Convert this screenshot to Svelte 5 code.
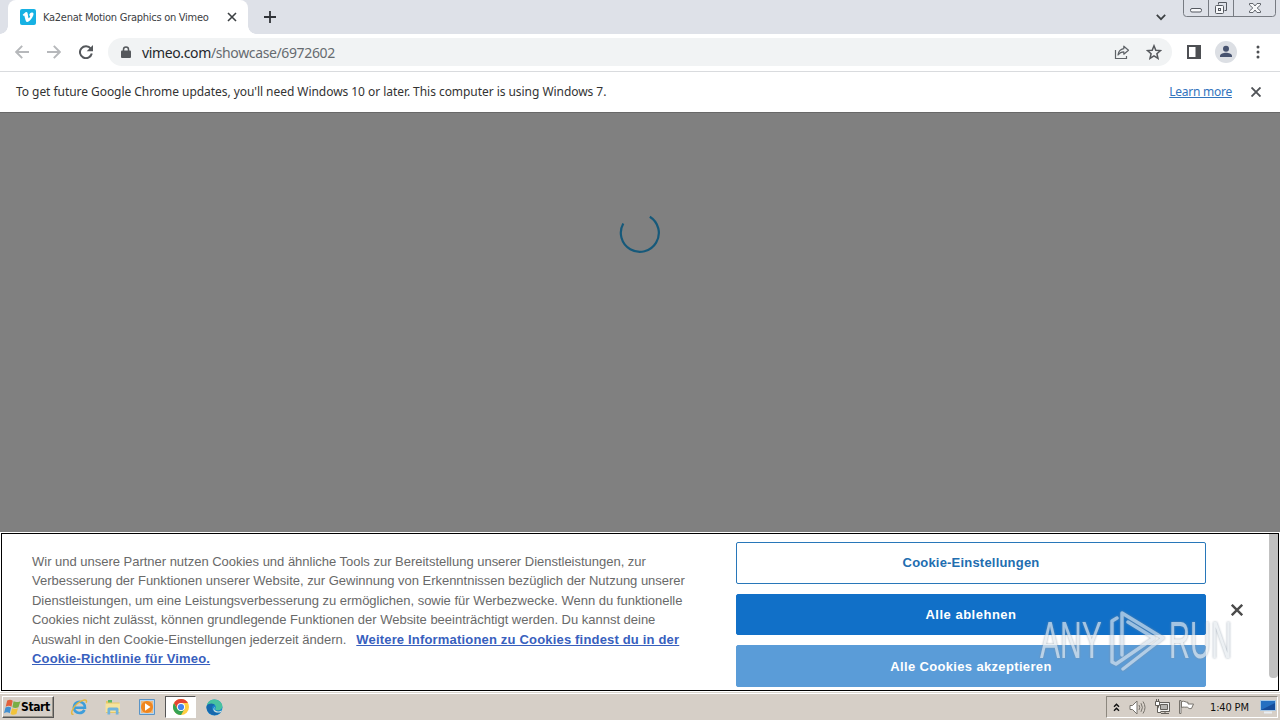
<script lang="ts">
	type Line = { text: string; link?: string };

	const pageTitle = 'Ka2enat Motion Graphics on Vimeo';
	const time = '1:40 PM';

	const lines: Line[] = [
		{ text: 'Wir und unsere Partner nutzen Cookies und ähnliche Tools zur Bereitstellung unserer Dienstleistungen, zur' },
		{ text: 'Verbesserung der Funktionen unserer Website, zur Gewinnung von Erkenntnissen bezüglich der Nutzung unserer' },
		{ text: 'Dienstleistungen, um eine Leistungsverbesserung zu ermöglichen, sowie für Werbezwecke. Wenn du funktionelle' },
		{ text: 'Cookies nicht zulässt, können grundlegende Funktionen der Website beeinträchtigt werden. Du kannst deine' },
		{ text: 'Auswahl in den Cookie-Einstellungen jederzeit ändern.', link: 'Weitere Informationen zu Cookies findest du in der' },
		{ text: '', link: 'Cookie-Richtlinie für Vimeo.' }
	];
</script>

<div class="screen">
	<header class="tabstrip">
		<div class="tab">
			<svg class="favicon" width="16" height="16" viewBox="0 0 16 16">
				<rect width="16" height="16" rx="2" fill="#17b1e3" />
				<path d="M2.7 5.7 5.5 3.3c1.5-.8 2 .2 2.3 2l.5 3.3c.3 1 .7.9 1.3-.1.8-1.3 1-2.3-.5-1.9.5-2.4 1.8-3.5 3.4-3.1 1.3.4 1.2 1.8.7 3.1-.8 2.2-3 4.9-4.6 6-1.7 1-2.6-.1-3.1-1.7L4.4 7.1c-.2-.8-.5-.6-1.1-.2z" fill="#fff" />
			</svg>
			<span class="tab-title">{pageTitle}</span>
			<svg width="10" height="10" viewBox="0 0 10 10" stroke="#3c4043" stroke-width="1.6"><path d="m1 1 8 8M9 1 1 9" /></svg>
		</div>
		<svg class="new-tab" width="12" height="12" viewBox="0 0 12 12" stroke="#303338" stroke-width="1.8"><path d="M6 0v12M0 6h12" /></svg>
		<svg class="tab-search" width="10" height="7" viewBox="0 0 10 7" fill="none" stroke="#3c4043" stroke-width="1.7"><path d="m.8.8 4.2 4.4L9.2.8" /></svg>
		<svg class="window-buttons" width="94" height="18" viewBox="0 0 94 18" fill="none" stroke="#777b82">
			<path d="M.5 0v13.5q0 3 3 3h86q3 0 3-3V0M25.5 0v16M50.5 0v16" />
			<rect x="7.5" y="8.500" width="11" height="3.5" rx="1.5" fill="#f7f8fa" stroke="#555960" />
			<path d="M35.5 4.5v-2h8v8h-2" stroke="#555960" />
			<rect x="32.5" y="5.5" width="8" height="8" rx="1" fill="#f7f8fa" stroke="#555960" />
			<rect x="35.5" y="8.5" width="2" height="2" stroke="#555960" />
			<path d="M66.500 3.500h3.500l2 2.500 2-2.500h3.500v1.500L74.200 8l3.300 3v1.500H74l-2-2.500-2 2.500h-3.500V11l3.300-3-3.300-3z" fill="#f7f8fa" stroke="#555960" stroke-width=".9" />
		</svg>
	</header>

	<nav class="toolbar">
		<svg class="back" width="14" height="14" viewBox="0 0 14 14" fill="none" stroke="#b6b8bb" stroke-width="1.9"><path d="M7.200.8 1.200 7l6 6.200M1.400 7H14" /></svg>
		<svg class="forward" width="14" height="14" viewBox="0 0 14 14" fill="none" stroke="#b6b8bb" stroke-width="1.9"><path d="M6.800.8 12.800 7l-6 6.200M12.600 7H0" /></svg>
		<svg class="reload" width="14" height="14" viewBox="0 0 14 14" fill="none" stroke="#55585c" stroke-width="2"><path d="M11.800 3.600A6 6 0 1 0 12.800 8.600" /><path d="M14 0v6.300H7.700z" fill="#55585c" stroke="none" /></svg>
		<div class="omnibox">
			<svg width="10" height="13" viewBox="0 0 10 13"><path d="M2.500 5V3.400a2.500 2.500 0 0 1 5 0V5" fill="none" stroke="#55585c" stroke-width="1.5" /><rect y="4.500" width="10" height="7.500" rx="1" fill="#55585c" /></svg>
			<span class="url">vimeo.com<span class="path">/showcase/6972602</span></span>
			<svg class="share" width="16" height="15" viewBox="0 0 16 15" fill="none" stroke="#5f6368" stroke-width="1.2"><path d="M1.500 5v8.500h11V11" /><path d="M9.800 1.200 14.500 5.200l-4.700 4V6.800C7.500 6.800 5.700 7.600 4 10c.4-3.500 2.500-5.800 5.800-6.300z" stroke-linejoin="round" /></svg>
			<svg width="16" height="16" viewBox="0 0 16 16" fill="none" stroke="#55585c" stroke-width="1.5"><path d="m8 1.800 1.800 4.400 4.700.4-3.600 3.100 1.100 4.600-4-2.500-4 2.500 1.100-4.600-3.600-3.100 4.700-.4z" /></svg>
		</div>
		<svg class="panel" width="14" height="14" viewBox="0 0 14 14"><path d="M0 0h14v14H0zM2 2v10h6.500V2z" fill="#4d4f53" fill-rule="evenodd" /></svg>
		<svg class="profile" width="22" height="22" viewBox="0 0 22 22"><circle cx="11" cy="11" r="11" fill="#dcdfe4" /><circle cx="11" cy="7.700" r="3" fill="#47536f" /><path d="M5 16v-1c0-2.200 3.500-3.300 6-3.300s6 1.100 6 3.300v1z" fill="#47536f" /></svg>
		<svg class="menu" width="4" height="14" viewBox="0 0 4 14" fill="#4d4f53"><circle cx="2" cy="2" r="1.500" /><circle cx="2" cy="7" r="1.500" /><circle cx="2" cy="12" r="1.500" /></svg>
	</nav>

	<div class="infobar">
		<span class="notice">To get future Google Chrome updates, you'll need Windows 10 or later. This computer is using Windows 7.</span>
		<span class="learn">Learn more</span>
		<svg width="10" height="10" viewBox="0 0 10 10" stroke="#505357" stroke-width="1.9"><path d="m.5.500 9 9M9.500.500l-9 9" /></svg>
	</div>

	<main class="page">
		<svg width="42" height="42" viewBox="0 0 42 42" fill="none" stroke="#16597a" stroke-width="2.2"><path d="M4.300 11.500A19 19 0 1 0 30.800 4.700" /></svg>
	</main>

	<section class="banner">
		<div class="consent">
			<p>
				{#each lines as line}
					<span class="line">{#if line.text}<span class="text">{line.text}</span>{/if}{#if line.link}<b>{line.link}</b>{/if}</span>
				{/each}
			</p>
			<div class="actions">
				<button class="settings">Cookie-Einstellungen</button>
				<button class="reject">Alle ablehnen</button>
				<button class="accept">Alle Cookies akzeptieren</button>
			</div>
			<svg class="close" width="12" height="12" viewBox="0 0 12 12" stroke="#4b4b4b" stroke-width="2.4"><path d="m.8.800 10.400 10.400M11.200.800.800 11.200" /></svg>
			<div class="scrollbar"></div>
		</div>
	</section>

	<footer class="taskbar">
		<div class="start">
			<svg width="17" height="17" viewBox="0 0 16 16">
				<path d="M3 1.500c2-1 3.600-.9 5.200.1L7 7.200C5.400 6.200 3.600 6.200 1.600 7.200z" fill="#e2603b" />
				<path d="M9 2.200c2 1 3.700 1 6.500-.1L13.600 7.800c-2 1-3.900 1-5.700 0z" fill="#79ae45" />
				<path d="M1.400 8c2-1 3.600-.9 5.300.1l-1.300 5.200c-1.800-1-3.400-1-5.400 0z" fill="#428fd0" />
				<path d="M7.600 8.600c1.900 1 3.500 1 5.500 0l-1.400 5.500c-2 1-3.700 1-5.500-.1z" fill="#f2c33a" />
			</svg>
			<span>Start</span>
		</div>
		<div class="apps">
			<svg width="18" height="18" viewBox="0 0 18 18" fill="none">
				<path d="M14.500 11.800C13.300 14.200 11.500 15 9.300 15a5.600 5.600 0 1 1 5.700-5.200H5" stroke="#3e9edb" stroke-width="2.600" />
				<path d="M3.500 16.200C-.5 17.500 2.500 9 8 5c4.500-3.300 10-4.700 8.200-.2" stroke="#e5b842" stroke-width="1.500" />
			</svg>
			<svg width="18" height="18" viewBox="0 0 18 18">
				<path d="M2 3h5l1 1.500h7.500V15H2z" fill="#e7c766" /><path d="M4 2h4v2.500H4z" fill="#5db868" /><path d="M1.500 5.500h14.500v8.500H1.500z" fill="#f6e39d" /><path d="M3.500 16.500V11q0-1.500 1.500-1.500h8q1.500 0 1.500 1.500v5.500h-2.700v-4h-5.600v4z" fill="#71b4dc" />
			</svg>
			<svg width="18" height="18" viewBox="0 0 18 18">
				<path d="M1.500 1.500h15v15h-15z" fill="#b6d5ee" stroke="#5a94c6" /><path d="M3 3h12v12H3z" fill="#efb87c" /><circle cx="9" cy="9" r="6" fill="#ef861f" /><path d="m7 5.200 5.500 3.800L7 12.800z" fill="#fff" />
			</svg>
			<div class="active">
				<svg width="16" height="16" viewBox="0 0 16 16">
					<circle cx="8" cy="8" r="8" fill="#ffce42" /><path d="M8 8 4.500 10 1.070 4A8 8 0 0 0 8 16l3.500-6z" fill="#36a354" /><path d="M1.070 4A8 8 0 0 1 14.930 4H8L4.500 9.500z" fill="#e44434" /><circle cx="8" cy="8" r="4" fill="#fff" /><circle cx="8" cy="8" r="3.100" fill="#4384ef" />
				</svg>
			</div>
			<svg width="17" height="17" viewBox="0 0 17 17">
				<circle cx="8.500" cy="8.500" r="8" fill="#1688cf" /><path d="M.700 7C2 .700 7.500-.700 12 1.200c4 1.800 5.500 6.200 3.500 8.600-1.700 2-5.500 1.800-6.200.7-.6-.9.800-1.200.5-3C9.400 4.700 3.500 4 .700 7z" fill="#48c2a0" /><path d="M.6 7C3 3.500 8 4.400 9 6.300 5.700 6 5.500 10 7.300 12c2 2.200 5.200 2 7.500.8-2 3-6.500 4.500-10 2.300C1.500 13.200 0 10 .6 7z" fill="#1768ad" /><path d="M9.700 7.700c-1.500.5-2 2.500-.8 3.600 1.700 1.700 5 1.300 7.800-.4L15 13c-2.500 1-5.500.7-7-1-1.200-1.500-.5-4 1.700-4.300z" fill="#d5dfd9" />
			</svg>
		</div>
		<div class="tray">
			<svg class="chevrons" width="7" height="9" viewBox="0 0 7 9" fill="none" stroke="#111" stroke-width="1.400"><path d="m1 3.800 2.500-2.600L6 3.800M1 7.800l2.500-2.600L6 7.800" /></svg>
			<svg class="sound" width="17" height="15" viewBox="0 0 17 15" fill="none" stroke="#77736c"><path d="M1 5.500h2.500L8 1v13L3.500 9.500H1z" fill="#fff" /><path d="M10 5q1.500 2.500 0 5M12 3.200q2.800 4.300 0 8.600M14 1.500q4 6 0 12" /></svg>
			<svg class="network" width="17" height="16" viewBox="0 0 17 16" fill="none" stroke="#625f59"><path d="M4.500 3.500h11v9h-11z" fill="#f0efed" /><path d="M6.500 5.500h7v5h-7z" fill="#b5b3af" /><path d="M7 14.500h8M11 13v1" /><path d="M1.500 2.500h4v4h-4zM2.500 0v2M4.500 0v2M3.500 7v6.500H7" fill="#fff" /></svg>
			<svg class="flag" width="17" height="16" viewBox="0 0 17 16" fill="#fff" stroke="#77736c"><path d="M1.500 1.500h1.500v13H1.500zM3.500 2.500c3-1 4 1 6.500.8V5h5.500l-2 4.500c-2.500.7-3.500-.5-4-1.500-2 .7-4-.5-6 .5z" /></svg>
			<span class="clock">{time}</span>
			<svg width="16" height="14" viewBox="0 0 16 14"><path d="M.5.500h15v10H.5z" fill="#256fc1" stroke="#a9c9e6" /><path d="M1 10 15 3v7z" fill="#164c9b" /><path d="M4 12.500h8" stroke="#e8edf2" stroke-width="2" /></svg>
		</div>
	</footer>

	<div class="watermark">
		<span class="any">ANY</span>
		<svg width="60" height="64" viewBox="0 0 60 64" fill="none" stroke-linejoin="round" stroke-linecap="round">
			<path d="M9 9 4 12v41l4 2 38-26-26-16M14 46V4l41 25-40 31" />
		</svg>
		<span class="run">RUN</span>
	</div>
</div>

<style>
	:global(body) {
		margin: 0;
		overflow: hidden;
	}

	.screen {
		position: relative;
		display: flex;
		flex-direction: column;
		width: 1280px;
		height: 720px;
		overflow: hidden;
		background: #fff;
		font-family: 'DejaVu Sans Condensed', 'Noto Sans', sans-serif;
		font-stretch: condensed;
	}

	svg {
		display: block;
		flex-shrink: 0;
	}

	.tabstrip {
		display: flex;
		align-items: center;
		box-sizing: border-box;
		height: 34px;
		padding-left: 8px;
		background: #dee1e8;
	}

	.tab {
		position: relative;
		display: flex;
		align-items: center;
		box-sizing: border-box;
		width: 240px;
		height: 34px;
		padding: 0 11px 0 12px;
		border-radius: 8px 8px 0 0;
		background: #fff;
	}

	.tab::before,
	.tab::after {
		content: '';
		position: absolute;
		bottom: 0;
		width: 8px;
		height: 8px;
	}

	.tab::before {
		left: -8px;
		background: radial-gradient(circle at 0 0, transparent 7.5px, #fff 8px);
	}

	.tab::after {
		right: -8px;
		background: radial-gradient(circle at 100% 0, transparent 7.5px, #fff 8px);
	}

	.tab-title {
		flex: 1;
		margin-left: 7px;
		color: #3c4043;
		font-size: 11px;
		letter-spacing: -0.27px;
		white-space: nowrap;
	}

	.new-tab {
		margin-left: 16px;
	}

	.tab-search {
		margin-left: auto;
	}

	.window-buttons {
		align-self: flex-start;
		margin: 0 3px 0 17px;
	}

	.toolbar {
		display: flex;
		align-items: center;
		box-sizing: border-box;
		height: 38px;
		padding: 0 20px 1px 15px;
		border-bottom: 1px solid #d9dbde;
	}

	.forward {
		margin-left: 18px;
	}

	.reload {
		margin: 0 15px 0 18px;
	}

	.omnibox {
		display: flex;
		flex: 1;
		align-items: center;
		box-sizing: border-box;
		height: 28px;
		padding: 0 10px 0 13px;
		border-radius: 14px;
		background: #f1f3f4;
	}

	.url {
		margin-left: 11px;
		color: #25282c;
		font-family: 'Noto Sans', sans-serif;
		font-size: 14px;
		letter-spacing: -0.37px;
	}

	.path {
		color: #666b70;
	}

	.share {
		margin: 0 16px 0 auto;
	}

	.panel {
		margin-left: 15px;
	}

	.profile {
		margin: 0 19px 0 14px;
	}

	.infobar {
		display: flex;
		align-items: center;
		box-sizing: border-box;
		height: 40px;
		padding: 0 19px 0 16px;
		font-family: 'Noto Sans', sans-serif;
		font-size: 12px;
	}

	.notice {
		padding-bottom: 2px;
		color: #333;
		letter-spacing: -0.05px;
	}

	.learn {
		margin: 0 19px 0 auto;
		padding-bottom: 2px;
		color: #3274bd;
		letter-spacing: -0.25px;
		text-decoration: underline;
	}

	.page {
		display: flex;
		justify-content: center;
		box-sizing: border-box;
		height: 420px;
		padding-top: 99px;
		border-top: 1px solid #686868;
		background: #808080;
	}

	.banner {
		box-sizing: border-box;
		height: 160px;
		padding: 1px;
	}

	.consent {
		display: flex;
		box-sizing: border-box;
		height: 158px;
		border: 1px solid #000;
	}

	p {
		width: 704px;
		box-sizing: border-box;
		margin: 0;
		padding: 17.5px 0 0 30px;
		color: #696969;
		font: 13px/19.5px 'Liberation Sans', Arial, sans-serif;
		letter-spacing: -0.015px;
		white-space: nowrap;
	}

	.line {
		display: block;
	}

	.text + b {
		margin-left: 10px;
	}

	b {
		color: #3860be;
		letter-spacing: 0.18px;
		text-decoration: underline;
	}

	.actions {
		display: grid;
		grid-template-rows: 42px 41px 42px;
		gap: 10px;
		width: 470px;
		margin: 8px 0 0 30px;
	}

	button {
		border: 1px solid #1170c8;
		border-radius: 2px;
		background: #1170c8;
		color: #fff;
		font: bold 13px 'Liberation Sans', Arial, sans-serif;
		letter-spacing: 0.34px;
	}

	.settings {
		padding-bottom: 3px;
		border-color: #2877b9;
		background: #fff;
		color: #216db0;
		letter-spacing: 0.2px;
	}

	.reject {
		letter-spacing: 0.5px;
	}

	.accept {
		border-color: #5a9cd8;
		background: #5a9cd8;
	}

	.close {
		align-self: center;
		margin: 0 auto 4px 25px;
	}

	.scrollbar {
		width: 9px;
		height: 144px;
		border-radius: 0 0 4px 4px;
		background: #c1c1c1;
	}

	.taskbar {
		display: flex;
		flex: 1;
		align-items: center;
		box-sizing: border-box;
		padding: 1px 2px 0;
		border-top: 1px solid #d8d4cc;
		background: #d6cfc7;
		box-shadow: inset 0 1px #fff;
	}

	.start {
		display: flex;
		align-items: center;
		box-sizing: border-box;
		width: 52px;
		height: 22px;
		padding-left: 1px;
		border: 1px solid;
		border-color: #fff #555 #555 #fff;
		box-shadow: inset -1px -1px #989389;
		font-size: 12px;
		font-weight: bold;
		letter-spacing: -0.4px;
	}

	.apps {
		display: flex;
		align-items: center;
		margin-left: 16px;
		gap: 16px;
	}

	.active {
		display: flex;
		align-items: center;
		justify-content: center;
		box-sizing: border-box;
		width: 31px;
		height: 22px;
		margin: 0 -6px 0 -7px;
		border: 1px solid;
		border-color: #555 #fff #fff #555;
		background: #fff;
	}

	.tray {
		display: flex;
		align-items: center;
		box-sizing: border-box;
		width: 172px;
		height: 22px;
		margin-left: auto;
		padding-left: 6px;
		border: 1px solid;
		border-color: #8c877e #fff #fff #8c877e;
	}

	.sound {
		margin-left: 9px;
	}

	.network {
		margin-left: 8px;
	}

	.flag {
		margin-left: 7px;
	}

	.clock {
		margin: 0 11px 0 15px;
		color: #111;
		font-size: 11px;
		letter-spacing: -0.15px;
		white-space: nowrap;
	}

	.watermark {
		position: absolute;
		top: 609px;
		left: 1040px;
		display: flex;
		align-items: center;
		color: #e5eaee;
		font: 51px/64px 'Liberation Sans', Arial, sans-serif;
		opacity: 0.7;
		filter: drop-shadow(0 0 1px #8090a0);
	}

	.any,
	.run {
		width: 68px;
		transform: scaleX(0.59);
		transform-origin: left;
	}

	.run {
		transform: scaleX(0.57);
	}

	.watermark svg {
		margin-right: 1px;
		stroke: #d8e2ec;
		stroke-width: 3.4;
	}
</style>
